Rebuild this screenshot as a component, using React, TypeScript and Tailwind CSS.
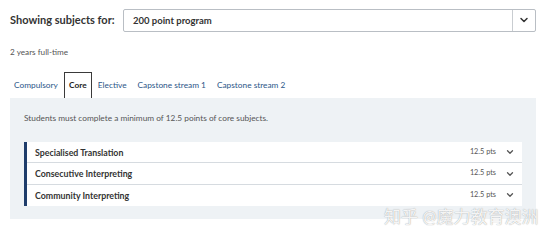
import { ChevronDown } from 'lucide-react'

const tabs = [
  { label: 'Compulsory', gap: 'mr-[6px]' },
  { label: 'Core', gap: 'mr-[6px]' },
  { label: 'Elective', gap: 'mr-[11px]' },
  { label: 'Capstone stream 1', gap: 'mr-[11px]' },
  { label: 'Capstone stream 2', gap: '' },
]

const subjects = [
  { name: 'Specialised Translation', points: '12.5 pts' },
  { name: 'Consecutive Interpreting', points: '12.5 pts' },
  { name: 'Community Interpreting', points: '12.5 pts' },
]

export default function App() {
  return (
    <div className="relative h-[244px] w-[553px] overflow-hidden bg-white font-['Lato','Noto_Sans_CJK_SC',sans-serif] text-[#333]">
      {/* Program selector */}
      <div className="flex h-[41px] items-center pl-[10px] pb-[1px]">
        <span className="w-[113px] whitespace-nowrap text-[11px] font-bold">Showing subjects for:</span>
        <div className="flex h-[23px] w-[413px] items-stretch rounded-[2px] border border-[#b9bec4] bg-white">
          <span className="flex-1 pl-[9px] text-[9.5px] font-bold leading-[21px] text-[#333]">200 point program</span>
          <span className="flex w-[23px] items-center justify-center border-l border-[#c9cdd1]">
            <ChevronDown size={12} strokeWidth={3} className="text-[#333]" />
          </span>
        </div>
      </div>

      <p className="flex h-[22px] items-center pl-[10px] text-[8.2px] text-[#555]">2 years full-time</p>

      {/* Tabs */}
      <div className="mt-[9px] flex items-end pl-[14px] text-[8.3px] text-[#2b5688]">
        {tabs.map((tab) =>
          tab.label === 'Core' ? (
            <span
              key={tab.label}
              className={`${tab.gap} flex h-[26px] w-[28px] items-center justify-center border border-b-0 border-[#3a3a3a] bg-white font-bold text-[#222]`}
            >
              {tab.label}
            </span>
          ) : (
            <span key={tab.label} className={`${tab.gap} flex h-[26px] items-center`}>
              {tab.label}
            </span>
          ),
        )}
      </div>

      {/* Panel */}
      <div className="mx-[10px] h-[121px] w-[526px] bg-[#eef2f5] px-[14px] pt-[14px]">
        <p className="text-[8.3px] leading-[12px] text-[#555]">
          Students must complete a minimum of 12.5 points of core subjects.
        </p>
        <div className="mt-[18px] w-[498px] border-l-[3px] border-[#1f3d6b] bg-white">
          {subjects.map((s, i) => (
            <div
              key={s.name}
              className={`flex h-[21.4px] items-center justify-between border-[#d6dbe0] pl-[8px] pr-[7px] ${
                i < subjects.length - 1 ? 'border-b' : ''
              }`}
            >
              <span className="text-[8.8px] font-bold text-[#333]">{s.name}</span>
              <span className="flex items-center gap-[9px] text-[7.3px] text-[#555]">
                {s.points}
                <ChevronDown size={10} strokeWidth={3} className="text-[#555]" />
              </span>
            </div>
          ))}
        </div>
      </div>

      {/* Watermark */}
      <span className="absolute left-[384px] top-[206px] whitespace-nowrap text-[17px] leading-[22px] text-white/90 [text-shadow:0_0_1px_#8a8a8a]">
        知乎 @魔力教育澳洲
      </span>
    </div>
  )
}
